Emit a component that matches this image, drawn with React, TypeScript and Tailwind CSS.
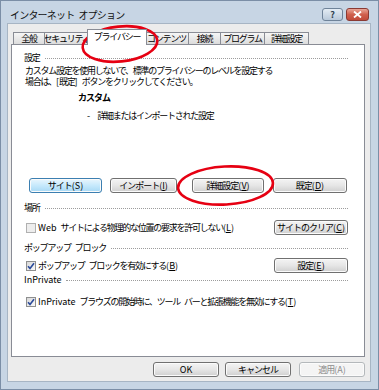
import type { ReactNode } from 'react'

const jp = "font-['Noto_Sans_CJK_JP','Noto_Sans',sans-serif]"

type BtnKind = 'normal' | 'default' | 'disabled'

function Btn({ children, kind = 'normal', className = '' }: { children: ReactNode; kind?: BtnKind; className?: string }) {
  const look =
    kind === 'default'
      ? 'border-[#3c7fb1] bg-linear-to-b from-[#eaf6fd] via-[#c6e9fc] to-[#a7d9f5] text-black'
      : kind === 'disabled'
        ? 'border-[#b4b8bb] bg-[#f4f4f4] text-[#8d8d8d]'
        : 'border-[#707070] bg-linear-to-b from-[#f4f4f4] via-[#e6e6e6] to-[#cfcfcf] text-black'
  return (
    <div
      className={`flex h-[15px] shrink-0 items-center justify-center rounded-[3px] border shadow-[inset_0_0_0_1px_#fbfbfb] text-[9px] leading-none tracking-[-1px] ${look} ${className}`}
    >
      {children}
    </div>
  )
}

// latin bits and spaces keep normal spacing
function N({ children }: { children: ReactNode }) {
  return <span className="tracking-normal">{children}</span>
}

function Sp() {
  return <span className="inline-block w-[4px]" />
}

function Key({ k }: { k: string }) {
  return (
    <span className="tracking-normal">
      (<span className="underline underline-offset-1">{k}</span>)
    </span>
  )
}

function CheckBox({ checked, disabled }: { checked?: boolean; disabled?: boolean }) {
  return (
    <span
      className={`flex h-[10px] w-[10px] shrink-0 items-center justify-center border ${
        disabled ? 'border-[#b0b0b0] bg-[#ededed]' : 'border-[#8e8f8f] bg-linear-to-br from-[#d8d8d8] to-[#fafafa]'
      }`}
    >
      {checked && (
        <svg width="8" height="8" viewBox="0 0 8 8">
          <path d="M1 4.2 L3 6.4 L7 1.2" fill="none" stroke="#2a4a9a" strokeWidth="1.6" />
        </svg>
      )}
    </span>
  )
}

function Section({ label, className = '' }: { label: ReactNode; className?: string }) {
  return (
    <div className={`flex h-[12px] items-center pl-[12px] pr-[16px] ${className}`}>
      <span className="whitespace-nowrap text-[9px] leading-[12px] tracking-[-1.2px]">{label}</span>
      <span className="ml-[5px] h-0 flex-1 border-t border-dotted border-[#9c9c9c]" />
    </div>
  )
}

const tabs = [
  { name: '全般', w: 'w-[32px]' },
  { name: 'セキュリティ', w: 'w-[45px]' },
  { name: 'プライバシー', w: 'w-[60px]', active: true },
  { name: 'コンテンツ', w: 'w-[45px]' },
  { name: '接続', w: 'w-[33px]' },
  { name: 'プログラム', w: 'w-[45px]' },
  { name: '詳細設定', w: 'w-[45px]' },
]

export default function App() {
  return (
    <div className={`relative flex h-[390px] w-[379px] flex-col overflow-hidden border border-[#7b8ea6] bg-[#c7d5e4] text-black ${jp}`}>
      {/* title bar */}
      <div className="flex h-[22px] shrink-0 items-start pl-[9px] pr-[9px] pt-[7px]">
        <span className="text-[10px] leading-[13px] tracking-[-0.8px] text-[#111]">
          インターネット<Sp />オプション
        </span>
        <div className="ml-auto flex gap-[3px]">
          <div className="flex h-[13px] w-[21px] items-center justify-center rounded-[3px] border border-[#6f8399] bg-linear-to-b from-[#e4ecf4] to-[#b9c9da] text-[9px] font-bold leading-none text-[#30404f]">
            ?
          </div>
          <div className="flex h-[13px] w-[23px] items-center justify-center rounded-[3px] border border-[#8a3a33] bg-linear-to-b from-[#e8a597] via-[#d0604e] to-[#c14a3a]">
            <svg width="9" height="7" viewBox="0 0 9 7">
              <path d="M1 0.5 L8 6.5 M8 0.5 L1 6.5" stroke="#fff" strokeWidth="1.8" />
            </svg>
          </div>
        </div>
      </div>

      {/* client area */}
      <div className="ml-[6px] mr-[7px] mb-[7px] flex flex-1 flex-col border border-[#a7b5c4] bg-[#ececec] pl-[3px] pr-[5px] pt-[5px]">
        {/* tabs */}
        <div className="flex h-[15px] items-end pl-[2px]">
          {tabs.map((t, i) =>
            t.active ? (
              <div
                key={t.name}
                className={`relative z-10 -mb-px -mx-[2px] flex h-[16px] ${t.w} items-start justify-center border border-b-0 border-[#898c95] bg-white pt-[1px] text-[9px] leading-[12px] tracking-[-1.2px]`}
              >
                {t.name}
              </div>
            ) : (
              <div
                key={t.name}
                className={`flex h-[12px] ${t.w} ${i > 0 ? '-ml-px' : ''} items-center justify-center overflow-hidden whitespace-nowrap border border-b-0 border-[#898c95] bg-linear-to-b from-[#f6f6f6] to-[#dcdcdc] text-[9px] leading-[12px] tracking-[-1.2px]`}
              >
                {t.name}
              </div>
            )
          )}
        </div>

        {/* tab page */}
        <div className="flex h-[313px] flex-col border border-[#898c95] bg-white">
          <Section label="設定" className="mt-[7px]" />
          <div className="mt-[1px] pl-[13px] text-[9px] leading-[11px] tracking-[-1.25px]">
            <div className="whitespace-nowrap">カスタム設定を使用しないで、標準のプライバシーのレベルを設定する</div>
            <div className="whitespace-nowrap">
              場合は、<N>[</N>既定<N>]</N>
              <Sp />
              ボタンをクリックしてください。
            </div>
          </div>
          <div className="mt-[5px] h-[12px] pl-[66px] text-[9px] font-bold leading-[12px] tracking-[-1px]">カスタム</div>
          <div className="mt-[6px] h-[12px] pl-[75px] text-[9px] leading-[12px] tracking-[-1.25px]">
            <N>-</N>
            <span className="inline-block w-[7px]" />
            詳細またはインポートされた設定
          </div>

          <div className="mt-[56px] flex pl-[17px]">
            <Btn kind="default" className="w-[73px]">
              サイト<N>(S)</N>
            </Btn>
            <Btn className="ml-[8px] w-[67px]">
              インポート<Key k="I" />
            </Btn>
            <Btn className="ml-[15px] w-[72px]">
              詳細設定<Key k="V" />
            </Btn>
            <Btn className="ml-[9px] w-[74px]">
              既定<Key k="D" />
            </Btn>
          </div>

          <Section label="場所" className="mt-[9px]" />
          <div className="mt-[6px] flex h-[15px] items-center pl-[14px] pr-[16px]">
            <CheckBox disabled />
            <span className="ml-[2px] whitespace-nowrap text-[9px] leading-[12px] tracking-[-1.25px]">
              <N>Web</N>
              <Sp />
              サイトによる物理的な位置の要求を許可しない<Key k="L" />
            </span>
            <Btn className="ml-auto w-[74px]">
              サイトのクリア<Key k="C" />
            </Btn>
          </div>

          <Section
            label={
              <>
                ポップアップ<Sp />ブロック
              </>
            }
            className="mt-[7px]"
          />
          <div className="mt-[4px] flex h-[15px] items-center pl-[14px] pr-[16px]">
            <CheckBox checked />
            <span className="ml-[2px] whitespace-nowrap text-[9px] leading-[12px] tracking-[-1.25px]">
              ポップアップ<Sp />ブロックを有効にする<Key k="B" />
            </span>
            <Btn className="ml-auto w-[74px]">
              設定<Key k="E" />
            </Btn>
          </div>

          <Section label={<N>InPrivate</N>} className="mt-[1px]" />
          <div className="mt-[10px] flex h-[12px] items-center pl-[14px]">
            <CheckBox checked />
            <span className="ml-[2px] whitespace-nowrap text-[9px] leading-[12px] tracking-[-1.25px]">
              <N>InPrivate</N>
              <Sp />
              ブラウズの開始時に、ツール<Sp />バーと拡張機能を無効にする<Key k="T" />
            </span>
          </div>
        </div>

        {/* dialog buttons */}
        <div className="mt-[5px] flex justify-end">
          <Btn className="w-[66px]">
            <N>OK</N>
          </Btn>
          <Btn className="ml-[6px] w-[66px]">キャンセル</Btn>
          <Btn kind="disabled" className="ml-[8px] w-[66px]">
            適用<N>(A)</N>
          </Btn>
        </div>
      </div>

      {/* red annotation ellipses */}
      <svg className="pointer-events-none absolute left-[-1px] top-[-1px]" width="379" height="390">
        <ellipse cx="120" cy="44" rx="37.5" ry="17.5" transform="rotate(-6 120 44)" fill="none" stroke="#e60012" strokeWidth="2.6" />
        <ellipse cx="225.5" cy="185.5" rx="47.5" ry="19" transform="rotate(-3 225.5 185.5)" fill="none" stroke="#e60012" strokeWidth="2.6" />
      </svg>
    </div>
  )
}
